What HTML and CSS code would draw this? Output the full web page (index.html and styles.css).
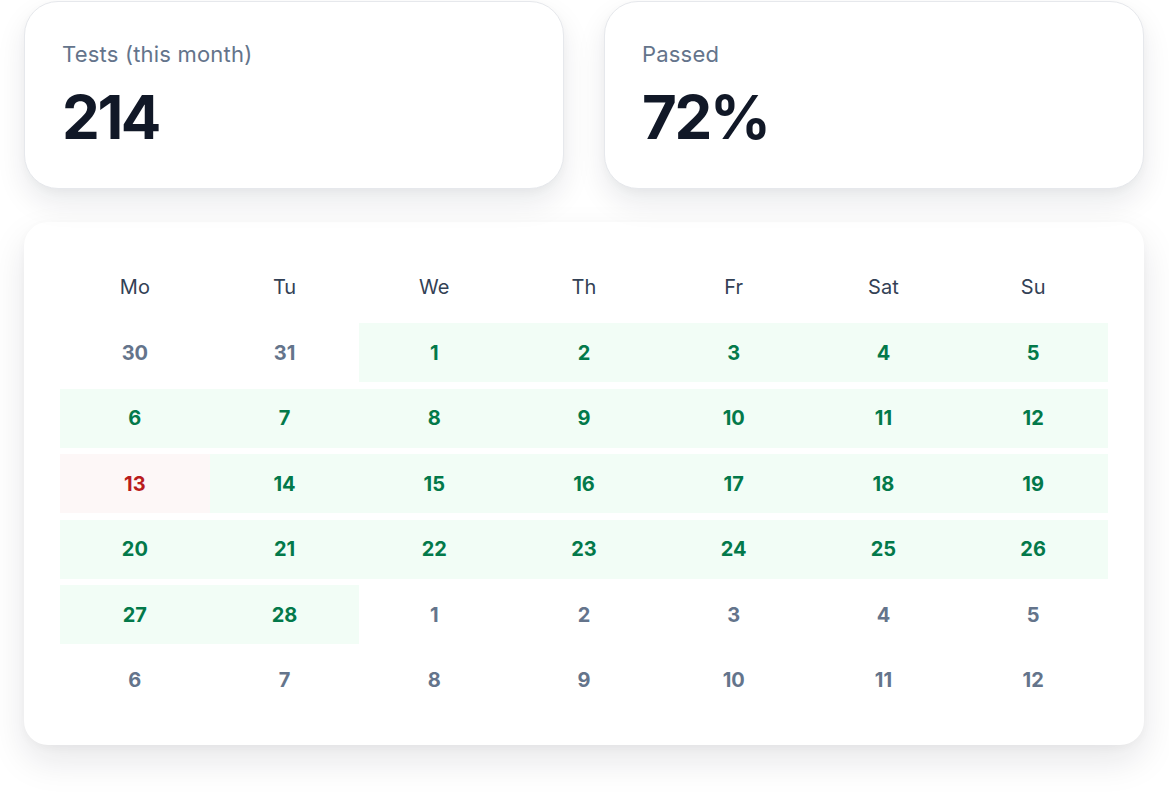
FILE: index.html
```html
<!DOCTYPE html>
<html lang="en">
<head>
<meta charset="utf-8">
<title>Tests calendar</title>
<link rel="stylesheet" href="styles.css">
</head>
<body>
<main class="page">
  <section class="stats">
    <div class="stat-card">
      <div class="stat-label">Tests (this month)</div>
      <div class="stat-value">214</div>
    </div>
    <div class="stat-card">
      <div class="stat-label">Passed</div>
      <div class="stat-value">72%</div>
    </div>
  </section>
  <section class="calendar-card">
    <div class="calendar">
      <div class="dow">Mo</div><div class="dow">Tu</div><div class="dow">We</div><div class="dow">Th</div><div class="dow">Fr</div><div class="dow">Sat</div><div class="dow">Su</div>

      <div class="day muted">30</div><div class="day muted">31</div><div class="day pass">1</div><div class="day pass">2</div><div class="day pass">3</div><div class="day pass">4</div><div class="day pass">5</div>

      <div class="day pass">6</div><div class="day pass">7</div><div class="day pass">8</div><div class="day pass">9</div><div class="day pass">10</div><div class="day pass">11</div><div class="day pass">12</div>

      <div class="day fail">13</div><div class="day pass">14</div><div class="day pass">15</div><div class="day pass">16</div><div class="day pass">17</div><div class="day pass">18</div><div class="day pass">19</div>

      <div class="day pass">20</div><div class="day pass">21</div><div class="day pass">22</div><div class="day pass">23</div><div class="day pass">24</div><div class="day pass">25</div><div class="day pass">26</div>

      <div class="day pass">27</div><div class="day pass">28</div><div class="day muted">1</div><div class="day muted">2</div><div class="day muted">3</div><div class="day muted">4</div><div class="day muted">5</div>

      <div class="day muted">6</div><div class="day muted">7</div><div class="day muted">8</div><div class="day muted">9</div><div class="day muted">10</div><div class="day muted">11</div><div class="day muted">12</div>
    </div>
  </section>
</main>
</body>
</html>
```

FILE: styles.css
```css
* { box-sizing: border-box; }

html, body {
  margin: 0;
  padding: 0;
  background: #ffffff;
}

body {
  font-family: Inter, "Noto Sans", "Liberation Sans", sans-serif;
  color: #0f172a;
}

.page {
  width: 1120px;
  margin: 0 0 0 24px;
  padding: 1px 0 60px;
}

.stats {
  display: grid;
  grid-template-columns: 1fr 1fr;
  column-gap: 40px;
}

.stat-card {
  background: #ffffff;
  border: 1px solid #e6e8ec;
  border-radius: 34px;
  padding: 38px 37px 37px;
  display: flex;
  flex-direction: column;
  gap: 16px;
  box-shadow: 0 14px 30px rgba(15, 23, 42, 0.09), 0 3px 8px rgba(15, 23, 42, 0.03);
}

.stat-label {
  font-size: 22px;
  line-height: 28px;
  letter-spacing: 0.2px;
  color: #64748b;
  font-weight: 400;
}

.stat-value {
  font-size: 60px;
  line-height: 67px;
  font-weight: 700;
  letter-spacing: -0.04em;
  color: #111827;
}

.calendar-card {
  margin-top: 33px;
  background: #ffffff;
  border-radius: 24px;
  padding: 36px 36px 35px;
  box-shadow: 0 16px 36px rgba(15, 23, 42, 0.10), 0 3px 10px rgba(15, 23, 42, 0.03);
}

.calendar {
  display: grid;
  grid-template-columns: repeat(7, 1fr);
  grid-auto-rows: 58.7px;
  row-gap: 6.8px;
}

.dow,
.day {
  display: flex;
  align-items: center;
  justify-content: center;
  font-size: 20px;
}

.dow {
  color: #334155;
  font-weight: 400;
}

.day {
  font-weight: 700;
}

.day.muted {
  color: #64748b;
}

.day.pass {
  background: #f2fdf6;
  color: #03794a;
}

.day.fail {
  background: #fdf7f7;
  color: #b91c1c;
}
```
